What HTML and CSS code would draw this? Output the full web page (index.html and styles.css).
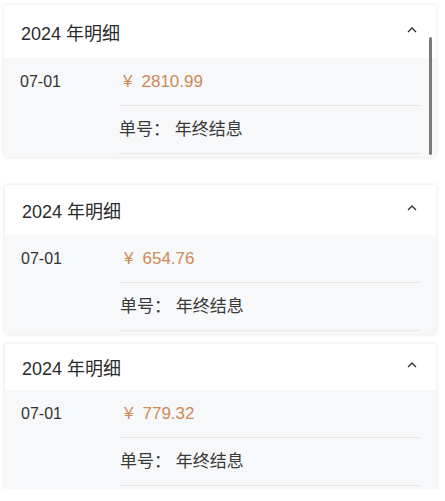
FILE: index.html
```html
<!DOCTYPE html>
<html lang="zh-CN">
<head>
    <meta charset="UTF-8">
    <meta name="viewport" content="width=device-width, initial-scale=1.0">
    <title>年度明细</title>
    <link rel="stylesheet" href="styles.css">
</head>
<body>
    <div class="lista">
        <div class="card card-um">
            <div class="card-head">
                <span class="titulo">2024 年明细</span>
                <svg class="seta" width="10" height="6" viewBox="0 0 10 6"><polyline points="1,5 5,1 9,5" fill="none" stroke="#333" stroke-width="1.4"/></svg>
            </div>
            <div class="card-body">
                <div class="data">07-01</div>
                <div class="info">
                    <div class="linha valor"><span class="moeda">¥</span>2810.99</div>
                    <div class="linha">单号：&nbsp;年终结息</div>
                </div>
            </div>
            <div class="scroll"></div>
        </div>

        <div class="card card-dois">
            <div class="card-head">
                <span class="titulo">2024 年明细</span>
                <svg class="seta" width="10" height="6" viewBox="0 0 10 6"><polyline points="1,5 5,1 9,5" fill="none" stroke="#333" stroke-width="1.4"/></svg>
            </div>
            <div class="card-body">
                <div class="data">07-01</div>
                <div class="info">
                    <div class="linha valor"><span class="moeda">¥</span>654.76</div>
                    <div class="linha">单号：&nbsp;年终结息</div>
                </div>
            </div>
        </div>

        <div class="card card-tres">
            <div class="card-head">
                <span class="titulo">2024 年明细</span>
                <svg class="seta" width="10" height="6" viewBox="0 0 10 6"><polyline points="1,5 5,1 9,5" fill="none" stroke="#333" stroke-width="1.4"/></svg>
            </div>
            <div class="card-body">
                <div class="data">07-01</div>
                <div class="info">
                    <div class="linha valor"><span class="moeda">¥</span>779.32</div>
                    <div class="linha">单号：&nbsp;年终结息</div>
                </div>
            </div>
        </div>
    </div>
</body>
</html>
```

FILE: styles.css
```css
body {
    margin: 0;
    background-color: #fff;
    font-family: "Liberation Sans", "Noto Sans CJK SC", sans-serif;
    color: #333;
}

.lista {
    display: flex;
    flex-direction: column;
    padding: 5px 9px 0 5px;
}

.card {
    position: relative;
    background-color: #fff;
    box-shadow: 0 0 4px rgba(0, 0, 0, 0.12);
}

.card-um {
    margin-left: -1px;
}

.card-dois {
    margin-top: 28px;
}

.card-tres {
    margin-top: 10px;
}

.card-head {
    height: 53px;
    display: flex;
    align-items: center;
    justify-content: space-between;
    padding: 0 19px 0 17px;
}

.card-dois .card-head {
    height: 50px;
}

.card-tres .card-head {
    height: 46px;
}

.titulo {
    font-size: 18px;
    color: #2b2b2b;
}

.seta {
    margin-top: -4px;
}

.card-body {
    display: flex;
    background-color: #f7f8f9;
    padding: 0 16px 3px 16px;
}

.data {
    width: 99px;
    height: 48px;
    line-height: 48px;
    font-size: 16px;
    color: #333;
}

.info {
    flex: 1;
}

.linha {
    height: 47px;
    line-height: 47px;
    border-bottom: 1px solid #e6e6e6;
    font-size: 17px;
    color: #383838;
}

.valor {
    color: #cc8a58;
    padding-left: 4px;
    font-size: 17px;
}

.moeda {
    margin-right: 9px;
}

.scroll {
    position: absolute;
    right: 4px;
    top: 32px;
    bottom: 2px;
    width: 3px;
    border-radius: 2px;
    background-color: #7a7a7a;
}
```
